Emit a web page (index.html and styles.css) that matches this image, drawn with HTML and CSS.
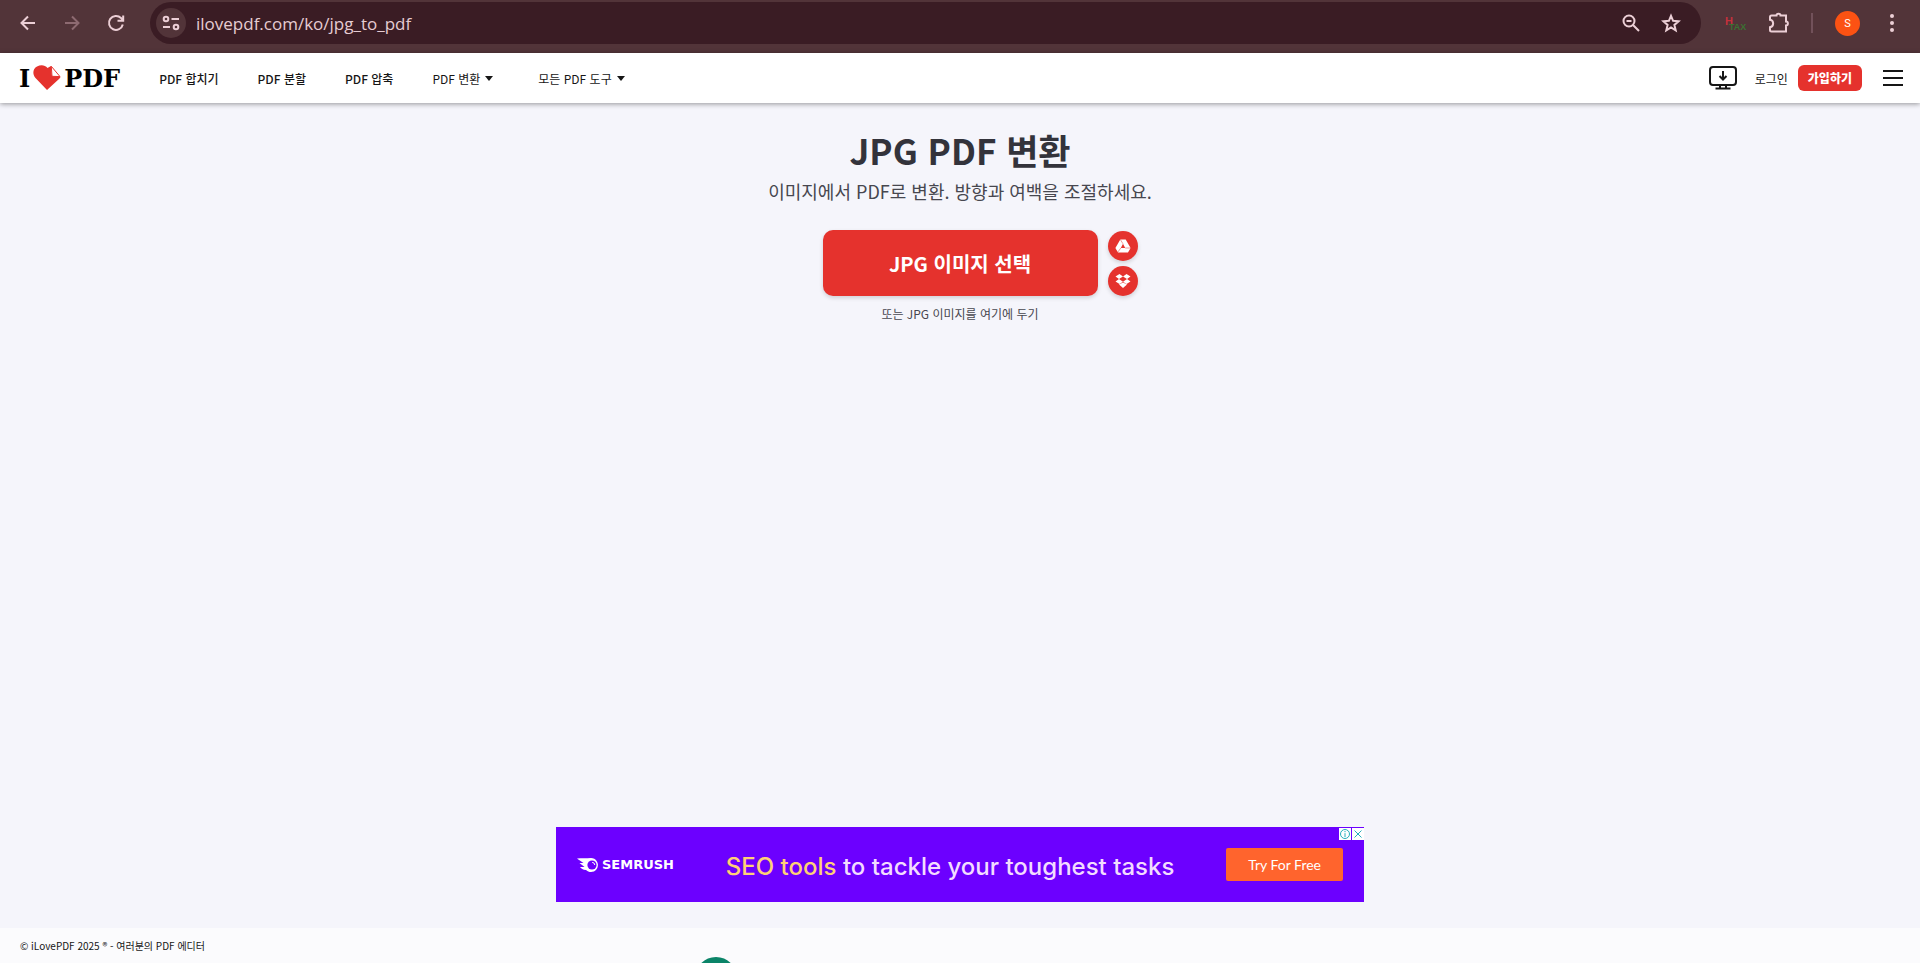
FILE: index.html
```html
<!DOCTYPE html>
<html lang="ko">
<head>
<meta charset="utf-8">
<meta name="viewport" content="width=device-width, initial-scale=1">
<title>JPG PDF 변환</title>
<link rel="stylesheet" href="styles.css">
</head>
<body>
<div class="browser">
  <button class="tool" aria-label="뒤로"><svg width="20" height="20" viewBox="0 0 20 20"><path d="M17 10H4M10 3.500L3.500 10L10 16.500"/></svg></button>
  <button class="tool tool-off" aria-label="앞으로"><svg width="20" height="20" viewBox="0 0 20 20"><path d="M3 10H16M10 3.500L16.500 10L10 16.500"/></svg></button>
  <button class="tool" aria-label="새로고침"><svg width="20" height="20" viewBox="0 0 20 20"><path d="M16.800 11.500A7 7 0 1 1 15 5L17 7.500M17.200 2.500V7.800H11.500"/></svg></button>
  <div class="omnibox">
    <button class="site" aria-label="사이트 정보"><svg width="18" height="16" viewBox="0 0 18 16"><circle cx="4" cy="4" r="2.300"/><path d="M9.500 4H17M1 12H8"/><circle cx="14" cy="12" r="2.300"/></svg></button>
    <input class="url" type="text" aria-label="주소" value="ilovepdf.com/ko/jpg_to_pdf">
    <button class="tool" aria-label="확대/축소"><svg width="20" height="20" viewBox="0 0 20 20"><circle cx="8" cy="8" r="5.500"/><path d="M12 12L18 18M5.500 8H10.500"/></svg></button>
    <button class="tool" aria-label="북마크"><svg width="20" height="20" viewBox="0 0 20 20"><path d="M10 2.800L12.100 7.800L17.600 8.300L13.400 11.900L14.700 17.300L10 14.400L5.300 17.300L6.600 11.900L2.400 8.300L7.900 7.800Z"/></svg></button>
  </div>
  <div class="extensions">
    <button class="ext" aria-label="H TAX"><span class="ext-h">H</span><span class="ext-tax">TAX</span></button>
    <button class="tool" aria-label="확장 프로그램"><svg width="22" height="22" viewBox="0 0 22 22"><path d="M4.500 3.500H9.500C9.500 1 13.500 1 13.500 3.500H19V9.500C21.500 9.500 21.500 13.500 19 13.500V19.500H4.500Q3 19.500 3 18V15.200C7.200 14.500 7.200 8.500 3 7.800V5Q3 3.500 4.500 3.500Z"/></svg></button>
    <span class="divider"></span>
    <button class="avatar" aria-label="프로필">S</button>
    <button class="tool tool-dots" aria-label="메뉴"><svg width="20" height="20" viewBox="0 0 20 20"><circle cx="10" cy="3" r="2"/><circle cx="10" cy="10" r="2"/><circle cx="10" cy="17" r="2"/></svg></button>
  </div>
</div>

<header class="header">
  <a class="logo" href="#" aria-label="iLovePDF"><span>I</span><svg width="28" height="26" viewBox="0 0 28 26"><path fill="#e5322d" d="M14 25L2.500 13C-1 9 0 3.500 4 1.500C8-.5 12 0 14.500 3L18 1L19 11L27.500 12Q27 13 26 14Z"/><path fill="#fff" stroke="#e5322d" stroke-width="1" d="M18.300 1.300L27 11.600L19 11.300Z"/></svg><span>PDF</span></a>
  <nav class="nav">
    <a href="#">PDF 합치기</a>
    <a href="#">PDF 분할</a>
    <a href="#">PDF 압축</a>
    <a class="more" href="#">PDF 변환<span class="caret"></span></a>
    <a class="more" href="#">모든 PDF 도구<span class="caret"></span></a>
  </nav>
  <div class="account">
    <a class="desktop" href="#" aria-label="데스크톱 앱"><svg width="28" height="24" viewBox="0 0 28 24"><rect x="1" y="1" width="26" height="18" rx="3"/><path d="M11 19V22M17 19V22M6.500 22.500H21.500M14 5V13M10.500 10L14 13.500L17.500 10"/></svg></a>
    <a class="login" href="#">로그인</a>
    <a class="signup" href="#">가입하기</a>
    <button class="burger" aria-label="메뉴"><svg width="20" height="16" viewBox="0 0 20 16"><path d="M0 1H20M0 8H20M0 15H20"/></svg></button>
  </div>
</header>

<main class="main">
  <h1 class="title">JPG PDF 변환</h1>
  <p class="subtitle">이미지에서 PDF로 변환. 방향과 여백을 조절하세요.</p>
  <div class="uploader">
    <button class="pick">JPG 이미지 선택</button>
    <div class="clouds">
      <button class="cloud" aria-label="Google Drive"><svg width="16" height="14" viewBox="0 0 16 14"><path fill="#fff" fill-rule="evenodd" d="M5.300 .5H10.700L15.600 9L13 13.500H3L.4 9ZM8 4.800L5.800 9H10.200Z"/><path stroke="#e5322d" stroke-width=".5" fill="none" d="M5.300 .5L8 4.800M2.500 13.500L5.800 9M10.200 9H16"/></svg></button>
      <button class="cloud" aria-label="Dropbox"><svg width="16" height="14" viewBox="0 0 16 14"><path fill="#fff" d="M4.500 0L8 2.500L4 5L.5 2.500ZM11.500 0L15.500 2.500L12 5L8 2.500ZM4 5L8 7.700L4.500 10L.5 7.500ZM12 5L15.500 7.500L11.500 10L8 7.700ZM4 10.500L8 8.500L12 10.500L8 14Z"/></svg></button>
    </div>
  </div>
  <p class="drop">또는 JPG 이미지를 여기에 두기</p>
  <aside class="ad">
    <div class="brand"><svg width="22" height="14" viewBox="0 0 22 14"><path fill="#fff" d="M0 .5C5 .3 9 .2 14 0A7 7 0 1 1 9 12C6 12 4 10.500 3 9H7.500C6 7.500 4 6.500 2.500 5H6.500C4 3 1.500 2 0 .5Z"/><circle cx="15" cy="7" r="4.600" fill="#6c00ff"/><path d="M15.200 4.400A2.700 2.700 0 0 1 17.800 7" fill="none" stroke="#fff"/></svg><span>SEMRUSH</span></div>
    <p class="pitch"><span class="accent">SEO tools</span> to tackle your toughest tasks</p>
    <a class="try" href="#">Try For Free</a>
    <div class="choices">
      <button aria-label="광고 정보"><svg width="12" height="12" viewBox="0 0 12 12"><circle cx="6" cy="6" r="4.500"/><path d="M6 5.200V9M6 3V4.200"/></svg></button>
      <button aria-label="광고 닫기"><svg width="12" height="12" viewBox="0 0 12 12"><path d="M2.500 2.500L9.500 9.500M9.500 2.500L2.500 9.500"/></svg></button>
    </div>
  </aside>
</main>

<footer class="footer">
  <p>© iLovePDF 2025 <span class="reg">®</span> - 여러분의 PDF 에디터</p>
  <span class="bubble"></span>
</footer>
</body>
</html>
```
FILE: styles.css
```css
* { box-sizing: border-box; }
body {
  margin: 0;
  min-height: 100vh;
  display: flex;
  flex-direction: column;
  background: #f5f5fb;
  color: #161616;
  font-family: "Noto Sans CJK KR", sans-serif;
  font-size: 12px;
}
button { border: 0; padding: 0; background: none; font-family: inherit; cursor: pointer; }
a { color: inherit; text-decoration: none; }
p, h1 { margin: 0; }
svg { display: block; }

.browser {
  display: flex;
  align-items: center;
  gap: 24px;
  padding: 2px 18px 9px;
  background: #523439;
}
.tool svg, .site svg { fill: none; stroke: #eccfd6; stroke-width: 2; }
.tool-off svg { stroke: #8d6a71; }
.tool-dots svg { fill: #eccfd6; stroke: none; }
.omnibox {
  flex: 1;
  display: flex;
  align-items: center;
  gap: 20px;
  height: 42px;
  padding: 0 20px 0 6px;
  border-radius: 21px;
  background: #3a1c24;
}
.site {
  display: grid;
  place-items: center;
  width: 30px;
  height: 30px;
  border-radius: 50%;
  background: #523439;
}
.url {
  flex: 1;
  min-width: 0;
  margin-left: -10px;
  padding: 0;
  border: 0;
  outline: 0;
  background: none;
  color: #e6ccd2;
  font: 17px "Open Sans", sans-serif;
}
.extensions { display: flex; align-items: center; gap: 22px; }
.ext { display: flex; width: 20px; font: bold 9px "Liberation Sans", sans-serif; }
.ext-h { color: #c5303c; font-size: 11px; }
.ext-tax { margin-left: -4px; padding-top: 7px; color: #3b7132; }
.divider { width: 2px; height: 20px; background: #72515a; }
.avatar {
  width: 25px;
  height: 25px;
  border-radius: 50%;
  background: #fb5213;
  color: #fff;
  font: 11px Roboto, sans-serif;
}

.header {
  display: flex;
  align-items: center;
  height: 50px;
  padding: 0 17px 0 19px;
  background: #fff;
  box-shadow: 0 1px 5px rgba(0, 0, 0, .4);
}
.logo {
  display: flex;
  align-items: center;
  gap: 3px;
  color: #000;
  font: bold 24px "DejaVu Serif", serif;
}
.nav { display: flex; gap: 39px; margin-left: 39px; font-weight: 500; }
.more { display: flex; align-items: center; gap: 5px; padding-right: 6px; font-weight: 400; }
.caret { border: 4px solid transparent; border-top: 5px solid #161616; border-bottom: 0; }
.account { display: flex; align-items: center; margin-left: auto; }
.desktop svg { fill: none; stroke: #161616; stroke-width: 2; }
.login { margin: 0 10px 0 18px; }
.signup {
  padding: 0 10px;
  border-radius: 6px;
  background: #e5322d;
  color: #fff;
  font-weight: 900;
  line-height: 26px;
}
.burger { margin-left: 21px; }
.burger svg { stroke: #161616; stroke-width: 2; }

.main {
  flex: 1;
  display: flex;
  flex-direction: column;
  align-items: center;
  padding: 21px 20px 26px;
}
.title { color: #33333b; font-size: 35px; font-weight: 700; line-height: 52px; }
.subtitle { color: #47474f; font-size: 18px; line-height: 30px; }
.uploader {
  display: grid;
  grid-template-columns: 30px auto 30px;
  column-gap: 10px;
  margin-top: 24px;
}
.pick {
  grid-column: 2;
  min-width: 275px;
  min-height: 66px;
  border-radius: 10px;
  background: #e5322d;
  box-shadow: 0 2px 4px rgba(0, 0, 0, .15);
  color: #fff;
  font-size: 20px;
  font-weight: 700;
}
.clouds { display: flex; flex-direction: column; justify-content: flex-end; gap: 5px; }
.cloud {
  display: grid;
  place-items: center;
  width: 30px;
  height: 30px;
  border-radius: 50%;
  background: #e5322d;
  box-shadow: 0 2px 4px rgba(0, 0, 0, .15);
}
.drop { margin-top: 9px; color: #47474f; line-height: 18px; }

.ad {
  position: relative;
  display: flex;
  align-items: center;
  justify-content: space-between;
  width: 100%;
  max-width: 808px;
  height: 75px;
  margin-top: auto;
  padding: 0 21px;
  background: #6c00ff;
  color: #fff;
}
.brand { display: flex; align-items: center; gap: 3px; font: bold 13px "DejaVu Sans", sans-serif; }
.pitch { color: #f3dcff; font: 500 24px/32px Inter, sans-serif; padding-top: 5px; }
.accent { color: #ffd076; }
.try {
  padding: 0 22px;
  border-radius: 2px;
  background: #ff642d;
  font: 14px/33px Lato, sans-serif;
}
.choices { position: absolute; top: 1px; right: 0; display: flex; gap: 1px; }
.choices button { background: #fff; }
.choices svg { fill: none; stroke: #25aebb; }

.footer {
  position: relative;
  overflow: hidden;
  padding: 9px 20px 8px;
  background: #fbfbfd;
  font-size: 10px;
  line-height: 18px;
}
.reg { font-size: 10px; }
.bubble {
  position: absolute;
  left: 695px;
  top: 29px;
  width: 42px;
  height: 42px;
  border-radius: 50%;
  background: #0b8468;
}
```
